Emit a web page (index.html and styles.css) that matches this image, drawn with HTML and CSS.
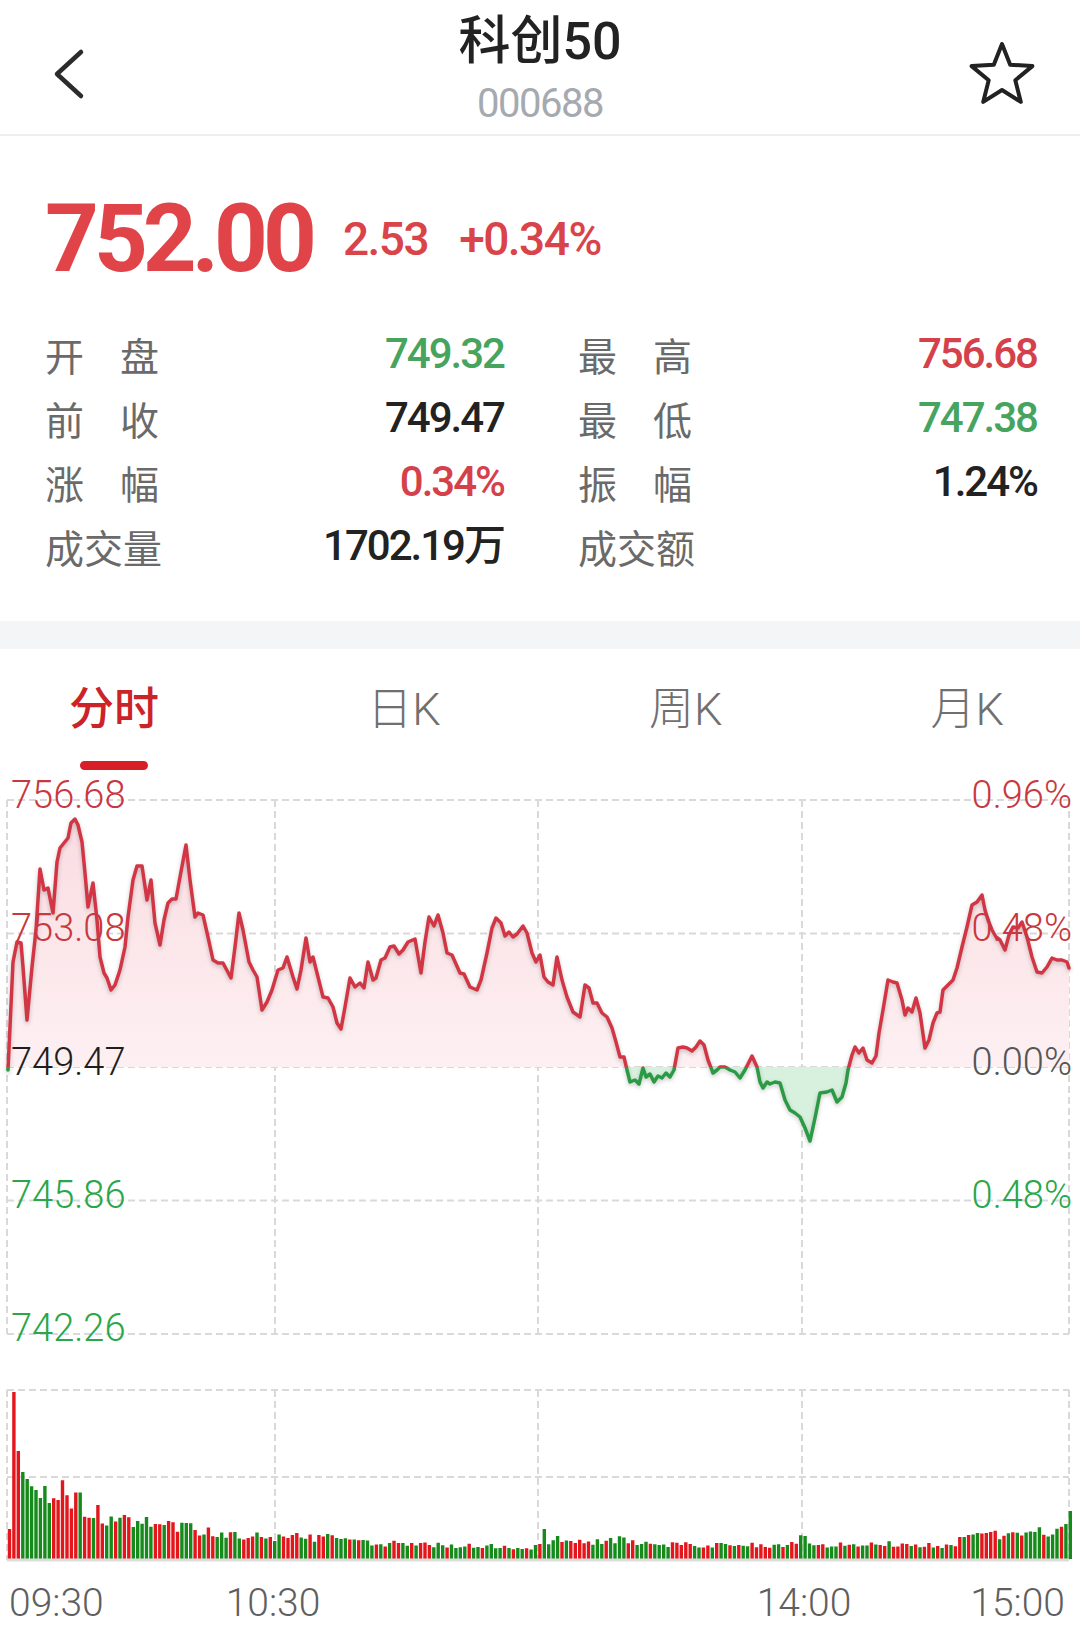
FILE: index.html
```html
<!DOCTYPE html>
<html lang="zh-CN">
<head>
<meta charset="utf-8">
<title>科创50</title>
<link rel="stylesheet" href="styles.css">
</head>
<body>
<div class="page">
  <header class="topbar">
    <svg class="back" viewBox="0 0 34 52" width="34" height="52"><path d="M29 4 L5 26 L29 48"/></svg>
    <div class="title">
      <div class="name">科创50</div>
      <div class="code">000688</div>
    </div>
    <svg class="star" viewBox="0 0 68 64" width="68" height="64"><path d="M34 2 L42.2 22.7 L64.4 24.1 L47.3 38.3 L52.8 59.9 L34 48 L15.2 59.9 L20.7 38.3 L3.6 24.1 L25.8 22.7 Z"/></svg>
  </header>

  <section class="quote">
    <div class="price-row">
      <span class="price">752.00</span>
      <span class="chg">2.53</span>
      <span class="chg">+0.34%</span>
    </div>
    <div class="stats">
      <div class="cell"><span class="lbl two"><span>开</span><span>盘</span></span><span class="val up-g">749.32</span></div>
      <div class="cell"><span class="lbl two"><span>最</span><span>高</span></span><span class="val up-r">756.68</span></div>
      <div class="cell"><span class="lbl two"><span>前</span><span>收</span></span><span class="val dark">749.47</span></div>
      <div class="cell"><span class="lbl two"><span>最</span><span>低</span></span><span class="val up-g">747.38</span></div>
      <div class="cell"><span class="lbl two"><span>涨</span><span>幅</span></span><span class="val up-r">0.34%</span></div>
      <div class="cell"><span class="lbl two"><span>振</span><span>幅</span></span><span class="val dark">1.24%</span></div>
      <div class="cell"><span class="lbl">成交量</span><span class="val dark">1702.19万</span></div>
      <div class="cell"><span class="lbl">成交额</span><span class="val dark"></span></div>
    </div>
  </section>

  <div class="band"></div>

  <nav class="tabs">
    <div class="tab active"><span class="tab-text">分时</span><span class="tab-bar"></span></div>
    <div class="tab"><span class="tab-text">日K</span></div>
    <div class="tab"><span class="tab-text">周K</span></div>
    <div class="tab"><span class="tab-text">月K</span></div>
  </nav>

  <svg class="chart" viewBox="0 770 1080 874" width="1080" height="874">
    <defs>
      <linearGradient id="pk" gradientUnits="userSpaceOnUse" x1="0" y1="810" x2="0" y2="1067">
        <stop offset="0" stop-color="#fadce1"/>
        <stop offset="1" stop-color="#fdf0f2"/>
      </linearGradient>
      <clipPath id="up"><rect x="0" y="770" width="1080" height="297"/></clipPath>
      <clipPath id="dn"><rect x="0" y="1067" width="1080" height="300"/></clipPath>
      <polyline id="pline" points="8,1070 13,962 17,942 21,943 23,967 27,1020 32,967 36,930 40,869 44,890 48,888 53,913 57,862 60,848 64,843 68,838 71,823 75,819 78,825 82,842 85,873 88,907 93,883 97,920 100,957 104,973 107,978 111,990 115,985 120,970 125,947 128,917 133,880 137,866 142,866 147,900 151,880 155,923 160,945 164,920 168,903 172,899 176,899 180,877 186,845 190,880 195,917 198,913 203,915 208,937 213,960 218,963 223,963 231,978 235,947 239,913 243,930 249,962 253,970 257,977 262,1010 267,1002 272,990 278,970 283,968 287,957 293,977 297,989 301,970 306,938 310,962 313,957 318,977 323,997 328,998 333,1007 337,1023 341,1029 345,1007 350,978 355,987 360,983 364,988 368,962 373,980 376,978 381,960 385,958 390,947 394,946 399,954 403,950 408,942 415,939 421,973 425,942 429,917 434,926 438,915 443,933 447,953 452,955 460,973 464,974 470,987 477,990 481,980 487,953 492,928 496,918 501,923 505,936 509,932 513,937 517,934 523,926 527,933 532,953 536,962 540,955 544,977 548,982 553,985 557,957 562,980 567,997 573,1012 580,1017 585,985 589,988 593,1003 597,1003 602,1013 607,1017 612,1028 616,1042 620,1057 624,1057 627,1070 630,1082 635,1080 639,1084 643,1068 646,1077 650,1074 654,1082 658,1076 662,1078 666,1073 670,1077 674,1070 678,1048 683,1047 687,1048 692,1051 696,1047 700,1041 704,1045 708,1060 713,1073 717,1070 720,1067 725,1067 730,1070 735,1072 740,1078 745,1070 752,1056 757,1067 760,1082 763,1088 767,1082 770,1084 775,1082 780,1083 785,1100 790,1110 795,1113 800,1117 805,1128 810,1141 815,1118 820,1093 827,1092 832,1090 837,1102 842,1097 846,1083 848,1070 852,1055 855,1047 859,1053 863,1048 867,1060 872,1063 876,1056 879,1033 883,1010 888,980 893,982 897,983 902,1000 905,1015 908,1008 912,1012 916,998 920,1013 925,1048 929,1040 933,1023 937,1013 940,1012 943,990 948,985 953,980 957,968 962,947 967,927 972,905 977,902 982,895 985,910 988,920 992,930 996,937 1000,940 1005,950 1009,935 1013,927 1018,928 1022,922 1027,937 1032,957 1037,972 1042,973 1047,967 1052,958 1057,960 1062,960 1067,962 1069,968"/>
      <polygon id="parea" points="8,1067 8,1070 13,962 17,942 21,943 23,967 27,1020 32,967 36,930 40,869 44,890 48,888 53,913 57,862 60,848 64,843 68,838 71,823 75,819 78,825 82,842 85,873 88,907 93,883 97,920 100,957 104,973 107,978 111,990 115,985 120,970 125,947 128,917 133,880 137,866 142,866 147,900 151,880 155,923 160,945 164,920 168,903 172,899 176,899 180,877 186,845 190,880 195,917 198,913 203,915 208,937 213,960 218,963 223,963 231,978 235,947 239,913 243,930 249,962 253,970 257,977 262,1010 267,1002 272,990 278,970 283,968 287,957 293,977 297,989 301,970 306,938 310,962 313,957 318,977 323,997 328,998 333,1007 337,1023 341,1029 345,1007 350,978 355,987 360,983 364,988 368,962 373,980 376,978 381,960 385,958 390,947 394,946 399,954 403,950 408,942 415,939 421,973 425,942 429,917 434,926 438,915 443,933 447,953 452,955 460,973 464,974 470,987 477,990 481,980 487,953 492,928 496,918 501,923 505,936 509,932 513,937 517,934 523,926 527,933 532,953 536,962 540,955 544,977 548,982 553,985 557,957 562,980 567,997 573,1012 580,1017 585,985 589,988 593,1003 597,1003 602,1013 607,1017 612,1028 616,1042 620,1057 624,1057 627,1070 630,1082 635,1080 639,1084 643,1068 646,1077 650,1074 654,1082 658,1076 662,1078 666,1073 670,1077 674,1070 678,1048 683,1047 687,1048 692,1051 696,1047 700,1041 704,1045 708,1060 713,1073 717,1070 720,1067 725,1067 730,1070 735,1072 740,1078 745,1070 752,1056 757,1067 760,1082 763,1088 767,1082 770,1084 775,1082 780,1083 785,1100 790,1110 795,1113 800,1117 805,1128 810,1141 815,1118 820,1093 827,1092 832,1090 837,1102 842,1097 846,1083 848,1070 852,1055 855,1047 859,1053 863,1048 867,1060 872,1063 876,1056 879,1033 883,1010 888,980 893,982 897,983 902,1000 905,1015 908,1008 912,1012 916,998 920,1013 925,1048 929,1040 933,1023 937,1013 940,1012 943,990 948,985 953,980 957,968 962,947 967,927 972,905 977,902 982,895 985,910 988,920 992,930 996,937 1000,940 1005,950 1009,935 1013,927 1018,928 1022,922 1027,937 1032,957 1037,972 1042,973 1047,967 1052,958 1057,960 1062,960 1067,962 1069,968 1069,1067"/>
    </defs>

    <g class="grid">
      <line x1="7" y1="800" x2="1069" y2="800"/>
      <line x1="7" y1="933.5" x2="1069" y2="933.5"/>
      <line x1="7" y1="1067" x2="1069" y2="1067"/>
      <line x1="7" y1="1200.5" x2="1069" y2="1200.5"/>
      <line x1="7" y1="1334" x2="1069" y2="1334"/>
      <line x1="7" y1="800" x2="7" y2="1334"/>
      <line x1="275" y1="800" x2="275" y2="1334"/>
      <line x1="538" y1="800" x2="538" y2="1334"/>
      <line x1="802" y1="800" x2="802" y2="1334"/>
      <line x1="1069" y1="800" x2="1069" y2="1334"/>
      <line x1="7" y1="1390" x2="1069" y2="1390"/>
      <line x1="7" y1="1477" x2="1069" y2="1477"/>
      <line x1="7" y1="1390" x2="7" y2="1560"/>
      <line x1="275" y1="1390" x2="275" y2="1560"/>
      <line x1="538" y1="1390" x2="538" y2="1560"/>
      <line x1="802" y1="1390" x2="802" y2="1560"/>
      <line x1="1069" y1="1390" x2="1069" y2="1560"/>
    </g>

    <use href="#parea" fill="url(#pk)" clip-path="url(#up)"/>
    <use href="#parea" fill="#d8f0de" clip-path="url(#dn)"/>
    <g class="lines">
      <use href="#pline" class="ln ln-r" clip-path="url(#up)"/>
      <use href="#pline" class="ln ln-g" clip-path="url(#dn)"/>
    </g>

    <text class="ax t-red" x="11" y="808">756.68</text>
    <text class="ax t-red" x="11" y="941">753.08</text>
    <text class="ax t-blk" x="11" y="1075">749.47</text>
    <text class="ax t-grn" x="11" y="1208">745.86</text>
    <text class="ax t-grn" x="11" y="1341">742.26</text>
    <text class="ax t-red end" x="1072" y="808">0.96%</text>
    <text class="ax t-red end" x="1072" y="941">0.48%</text>
    <text class="ax t-gry end" x="1072" y="1075">0.00%</text>
    <text class="ax t-grn end" x="1072" y="1208">0.48%</text>

    <g id="vol"></g>
    <line class="vbase" x1="7" y1="1560" x2="1069" y2="1560"/>

    <text class="tm" x="9" y="1616">09:30</text>
    <text class="tm mid" x="273" y="1616">10:30</text>
    <text class="tm mid" x="804" y="1616">14:00</text>
    <text class="tm end" x="1065" y="1616">15:00</text>
  </svg>
</div>
<script src="app.js"></script>
</body>
</html>
```

FILE: styles.css
```css
* { box-sizing: border-box; }

html, body {
  margin: 0;
  padding: 0;
  background: #ffffff;
}

body {
  font-family: "Roboto", "Noto Sans CJK SC", sans-serif;
  color: #222;
}

.page {
  width: 1080px;
  min-height: 1644px;
  overflow: hidden;
  background: #fff;
}

/* ---------- header ---------- */
.topbar {
  height: 136px;
  border-bottom: 2px solid #eeeeee;
  display: grid;
  grid-template-columns: 1fr auto 1fr;
  align-items: start;
}

.back {
  justify-self: start;
  margin-top: 48px;
  margin-left: 52px;
  fill: none;
  stroke: #2b2b2b;
  stroke-width: 4.5;
  stroke-linecap: round;
  stroke-linejoin: round;
}

.star {
  justify-self: end;
  margin-top: 42px;
  margin-right: 44px;
  fill: none;
  stroke: #222;
  stroke-width: 4;
  stroke-linejoin: round;
}

.title {
  padding-top: 14px;
  display: flex;
  flex-direction: column;
  align-items: center;
}

.name {
  font-size: 52px;
  line-height: 56px;
  font-weight: 500;
  color: #222;
}

.code {
  margin-top: 12px;
  font-size: 40px;
  line-height: 44px;
  letter-spacing: -1.5px;
  color: #a5aab0;
}

/* ---------- quote ---------- */
.quote {
  padding: 53px 43px 43px 45px;
}

.price-row {
  display: flex;
  align-items: center;
  column-gap: 31px;
  height: 100px;
}

.price {
  font-size: 94px;
  line-height: 100px;
  font-weight: 700;
  letter-spacing: -5px;
  color: #e04448;
}

.chg {
  font-size: 46px;
  line-height: 56px;
  font-weight: 500;
  letter-spacing: -1.5px;
  color: #d9434a;
}

.stats {
  margin-top: 33px;
  display: grid;
  grid-template-columns: 1fr 1fr;
  column-gap: 74px;
  grid-auto-rows: 64px;
}

.cell {
  display: flex;
  justify-content: space-between;
  align-items: center;
}

.lbl {
  font-family: "Noto Sans CJK SC", sans-serif;
  font-size: 39px;
  line-height: 64px;
  color: #6a6a6a;
}

.lbl.two {
  width: 114px;
  display: flex;
  justify-content: space-between;
}

.val {
  font-size: 42px;
  line-height: 64px;
  font-weight: 500;
  letter-spacing: -2px;
}

.up-g { color: #46a45f; }
.up-r { color: #d5414a; }
.dark { color: #222; }

.band {
  height: 28px;
  background: #f4f5f7;
}

/* ---------- tabs ---------- */
.tabs {
  display: flex;
  justify-content: space-between;
  align-items: flex-start;
  padding: 31px 76px 0 69px;
  height: 121px;
}

.tab {
  display: flex;
  flex-direction: column;
  align-items: center;
}

.tab-text {
  font-size: 45px;
  line-height: 60px;
  font-weight: 300;
  color: #707070;
}

.tab.active .tab-text {
  color: #cc2329;
  font-weight: 500;
}

.tab-bar {
  margin-top: 21px;
  width: 68px;
  height: 9px;
  border-radius: 5px;
  background: #d81e26;
}

/* ---------- chart ---------- */
.chart {
  display: block;
}

.grid line {
  stroke: #d9d9d9;
  stroke-width: 2;
  stroke-dasharray: 7 4;
}

.vbase {
  stroke: #dcdcdc;
  stroke-width: 3;
}

.lines {
  filter: drop-shadow(0 2px 2px rgba(0, 0, 0, 0.22));
}

.ln {
  fill: none;
  stroke-width: 3.5;
  stroke-linejoin: round;
  stroke-linecap: round;
}

.ln-r { stroke: #d23644; }
.ln-g { stroke: #2a9b44; }

.ax {
  font-family: "Roboto", sans-serif;
  font-size: 38px;
  font-weight: 300;
}

.t-red { fill: #c8383f; }
.t-blk { fill: #1e1e1e; }
.t-grn { fill: #2aa64b; }
.t-gry { fill: #555555; }

.end { text-anchor: end; }
.mid { text-anchor: middle; }

.tm {
  font-family: "Roboto", sans-serif;
  font-size: 39px;
  font-weight: 300;
  fill: #5f5f5f;
}

.vol-r {
  fill: none;
  stroke: #e3161c;
  stroke-width: 3.4;
}

.vol-g {
  fill: none;
  stroke: #178a1c;
  stroke-width: 3.4;
}
```

FILE: app.js
```js
(function () {
  var g = document.getElementById('vol');
  if (!g) return;
  var ns = 'http://www.w3.org/2000/svg';
  var env = [
    [8, 30], [13, 160], [17, 108], [22, 87], [27, 80], [33, 78], [41, 72], [52, 70],
    [61, 72], [69, 60], [78, 60], [86, 50], [98, 46], [107, 42], [120, 40], [150, 38],
    [172, 32], [200, 30], [240, 23], [270, 23], [345, 21], [380, 16], [480, 13],
    [536, 12], [541, 13], [560, 22], [580, 17], [620, 20], [650, 15], [700, 14],
    [790, 14], [800, 22], [812, 14], [880, 16], [950, 13], [965, 22], [1000, 25],
    [1040, 28], [1066, 30]
  ];
  function envAt(x) {
    for (var k = 1; k < env.length; k++) {
      if (x <= env[k][0]) {
        var a = env[k - 1], b = env[k];
        return a[1] + (b[1] - a[1]) * (x - a[0]) / (b[0] - a[0]);
      }
    }
    return env[env.length - 1][1];
  }
  var seed = 20240611;
  function rnd() {
    seed = (seed * 16807) % 2147483647;
    return seed / 2147483647;
  }
  var fixed = {
    0: [30, 'r'], 1: [167, 'r'], 2: [108, 'r'], 3: [87, 'g'], 4: [80, 'g'],
    121: [30, 'g'], 180: [23, 'g'], 240: [48, 'g']
  };
  var red = '', green = '';
  var base = 1559;
  for (var i = 0; i < 241; i++) {
    var x = 9.5 + i * 4.42;
    var h, c;
    if (fixed[i]) {
      h = fixed[i][0];
      c = fixed[i][1];
      rnd(); rnd();
    } else {
      h = envAt(x) * (0.78 + rnd() * 0.4);
      c = rnd() < 0.5 ? 'r' : 'g';
    }
    var seg = 'M' + x.toFixed(1) + ' ' + base + 'V' + (base - h).toFixed(1);
    if (c === 'r') red += seg; else green += seg;
  }
  var pr = document.createElementNS(ns, 'path');
  pr.setAttribute('d', red);
  pr.setAttribute('class', 'vol-r');
  var pg = document.createElementNS(ns, 'path');
  pg.setAttribute('d', green);
  pg.setAttribute('class', 'vol-g');
  g.appendChild(pr);
  g.appendChild(pg);
})();
```
